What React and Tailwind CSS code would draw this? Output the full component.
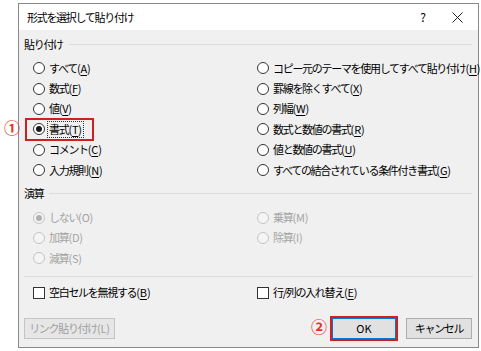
import React from 'react'

const font = { fontFamily: '"Noto Sans CJK JP", "Noto Sans", sans-serif' }

function Acc({ k, plain }) {
  return (
    <span className="tracking-[-0.2px]">
      ({plain ? k : <span className="underline underline-offset-2">{k}</span>})
    </span>
  )
}

function Radio({ label, k, checked, disabled }) {
  return (
    <div className="h-[20.4px] flex items-center">
      <span
        className={`w-[12px] h-[12px] rounded-full border flex items-center justify-center shrink-0 ${
          disabled ? 'border-[#c4c4c4] bg-[#f4f4f4]' : 'border-[#333] bg-white'
        }`}
      >
        {checked && (
          <span className={`w-[6px] h-[6px] rounded-full ${disabled ? 'bg-[#b0b0b0]' : 'bg-[#1a1a1a]'}`} />
        )}
      </span>
      <span className={`ml-[4px] whitespace-nowrap ${disabled ? 'text-[#a3a3a3]' : 'text-black'}`}>
        {label}
        <Acc k={k} plain={disabled} />
      </span>
    </div>
  )
}

function Check({ label, k }) {
  return (
    <div className="h-5 flex items-center">
      <span className="w-[12px] h-[12px] border border-[#333] bg-white shrink-0" />
      <span className="ml-[4px] whitespace-nowrap">
        {label}
        <Acc k={k} />
      </span>
    </div>
  )
}

function Section({ title }) {
  return (
    <div className="h-[14px] flex items-center pl-[5px] pr-[6px]">
      <span>{title}</span>
      <span className="flex-1 h-px bg-[#dcdcdc] ml-[6px]" />
    </div>
  )
}

export default function App() {
  return (
    <div
      className="w-[481px] h-[351px] bg-white relative pt-[3px] pl-[18px] text-[11px] tracking-[-1.3px] text-black leading-none"
      style={font}
    >
      <div className="w-[461px] h-[345px] border border-[#8a8a8a] bg-[#f0f0f0] flex flex-col">
        <div className="h-[26px] bg-white flex items-center pl-[8px] shrink-0">
          <span className="flex-1">形式を選択して貼り付け</span>
          <span className="w-[20px] text-center text-[12px] tracking-normal mr-[19px]">?</span>
          <svg width="11" height="11" viewBox="0 0 11 11" className="mr-[15px]">
            <path d="M0.5 0.5 L10.5 10.5 M10.5 0.5 L0.5 10.5" stroke="#222" strokeWidth="1" />
          </svg>
        </div>

        <div className="mt-[7px]">
          <Section title="貼り付け" />
        </div>
        <div className="grid grid-cols-[224px_1fr] pl-[14px] mt-[7px]">
          <div>
            <Radio label="すべて" k="A" />
            <Radio label="数式" k="F" />
            <Radio label="値" k="V" />
            <div className="relative">
              <div className="h-[20.4px] flex items-center">
                <span className="w-[12px] h-[12px] rounded-full border border-[#333] bg-white flex items-center justify-center shrink-0">
                  <span className="w-[6px] h-[6px] rounded-full bg-[#1a1a1a]" />
                </span>
                <span className="ml-[2px] px-[1px] py-[2px] border border-dotted border-[#333] whitespace-nowrap">
                  書式<Acc k="T" />
                </span>
              </div>
              <span className="absolute left-[-8px] top-[-1px] w-[69px] h-[23px] border-2 border-[#d01f1f]" />
            </div>
            <Radio label="コメント" k="C" />
            <Radio label="入力規則" k="N" />
          </div>
          <div>
            <Radio label="コピー元のテーマを使用してすべて貼り付け" k="H" />
            <Radio label="罫線を除くすべて" k="X" />
            <Radio label="列幅" k="W" />
            <Radio label="数式と数値の書式" k="R" />
            <Radio label="値と数値の書式" k="U" />
            <Radio label="すべての結合されている条件付き書式" k="G" />
          </div>
        </div>

        <div className="mt-[6px]">
          <Section title="演算" />
        </div>
        <div className="grid grid-cols-[224px_1fr] pl-[14px] mt-[7px]">
          <div>
            <Radio label="しない" k="O" checked disabled />
            <Radio label="加算" k="D" disabled />
            <Radio label="減算" k="S" disabled />
          </div>
          <div>
            <Radio label="乗算" k="M" disabled />
            <Radio label="除算" k="I" disabled />
          </div>
        </div>

        <div className="mt-[7px] mx-[5px] h-px bg-[#dcdcdc]" />

        <div className="grid grid-cols-[224px_1fr] pl-[14px] mt-[6px]">
          <Check label="空白セルを無視する" k="B" />
          <Check label="行/列の入れ替え" k="E" />
        </div>

        <div className="flex items-center mt-[13px] pl-[5px] pr-[6px]">
          <button className="w-[91px] h-[21px] bg-[#e6e6e6] border border-[#c4c4c4] text-[#a0a0a0] text-[11px] tracking-[-1.3px]">
            リンク貼り付け<span className="tracking-[-0.2px]">(L)</span>
          </button>
          <div className="flex-1" />
          <div className="w-[68px] h-[25px] border-2 border-[#d01f1f] flex items-center justify-center">
            <button className="w-[64px] h-[21px] bg-[#e1e1e1] border border-[#0078d7] text-[11px] tracking-normal">
              OK
            </button>
          </div>
          <button className="ml-[8px] w-[66px] h-[21px] bg-[#e1e1e1] border border-[#adadad] text-[11px] tracking-[-1.3px]">
            キャンセル
          </button>
        </div>
      </div>

      <span className="absolute left-[4px] top-[119px] text-[16px] tracking-normal text-[#e5322a] font-bold leading-none">①</span>
      <span className="absolute left-[311px] top-[318px] text-[16px] tracking-normal text-[#e5322a] font-bold leading-none">②</span>
    </div>
  )
}
